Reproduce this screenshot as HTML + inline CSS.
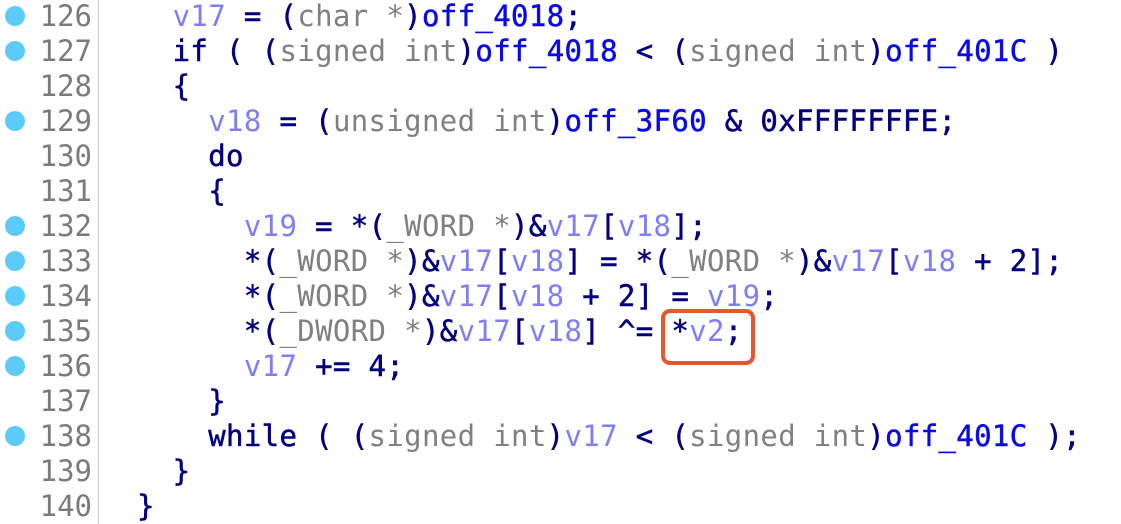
<!DOCTYPE html>
<html><head><meta charset="utf-8"><style>
html,body{margin:0;padding:0;background:#fff;width:1121px;height:524px;overflow:hidden}
.l{position:absolute;left:0;height:35px;width:1121px;font-family:"DejaVu Sans Mono","Liberation Mono",monospace;font-size:29px;line-height:35px;white-space:pre}
.n{position:absolute;left:30px;width:62px;text-align:right;color:#7b7b7b}
.d{position:absolute;left:5px;top:7px;width:20px;height:20px;border-radius:50%;background:#5ccbf9}
.c{position:absolute;left:137px;color:#000080;letter-spacing:0.35px;-webkit-text-stroke:0.5px #000080}
.v{color:#7f7ff5;-webkit-text-stroke:0}
.t{color:#808080;-webkit-text-stroke:0}
.b{color:#0a0ae6;-webkit-text-stroke:0.5px #0a0ae6}
.sep{position:absolute;left:98px;top:0;width:1px;height:524px;background:#d0d0d0}
.box{position:absolute;left:661px;top:309px;width:86px;height:48px;border:4px solid #e9562a;border-radius:9px}
</style></head><body>
<div class="sep"></div>
<div class="l" style="top:-1px"><div class="d"></div><span class="n">126</span><span class="c">  <span class="v">v17</span> = (<span class="t">char *</span>)<span class="b">off_4018</span>;</span></div>
<div class="l" style="top:34px"><div class="d"></div><span class="n">127</span><span class="c">  if ( (<span class="t">signed int</span>)<span class="b">off_4018</span> &lt; (<span class="t">signed int</span>)<span class="b">off_401C</span> )</span></div>
<div class="l" style="top:69px"><span class="n">128</span><span class="c">  {</span></div>
<div class="l" style="top:104px"><div class="d"></div><span class="n">129</span><span class="c">    <span class="v">v18</span> = (<span class="t">unsigned int</span>)<span class="b">off_3F60</span> &amp; 0xFFFFFFFE;</span></div>
<div class="l" style="top:139px"><span class="n">130</span><span class="c">    do</span></div>
<div class="l" style="top:174px"><span class="n">131</span><span class="c">    {</span></div>
<div class="l" style="top:209px"><div class="d"></div><span class="n">132</span><span class="c">      <span class="v">v19</span> = *(<span class="t">_WORD *</span>)&amp;<span class="v">v17</span>[<span class="v">v18</span>];</span></div>
<div class="l" style="top:244px"><div class="d"></div><span class="n">133</span><span class="c">      *(<span class="t">_WORD *</span>)&amp;<span class="v">v17</span>[<span class="v">v18</span>] = *(<span class="t">_WORD *</span>)&amp;<span class="v">v17</span>[<span class="v">v18</span> + 2];</span></div>
<div class="l" style="top:279px"><div class="d"></div><span class="n">134</span><span class="c">      *(<span class="t">_WORD *</span>)&amp;<span class="v">v17</span>[<span class="v">v18</span> + 2] = <span class="v">v19</span>;</span></div>
<div class="l" style="top:314px"><div class="d"></div><span class="n">135</span><span class="c">      *(<span class="t">_DWORD *</span>)&amp;<span class="v">v17</span>[<span class="v">v18</span>] ^= *<span class="v">v2</span>;</span></div>
<div class="l" style="top:349px"><div class="d"></div><span class="n">136</span><span class="c">      <span class="v">v17</span> += 4;</span></div>
<div class="l" style="top:384px"><span class="n">137</span><span class="c">    }</span></div>
<div class="l" style="top:419px"><div class="d"></div><span class="n">138</span><span class="c">    while ( (<span class="t">signed int</span>)<span class="v">v17</span> &lt; (<span class="t">signed int</span>)<span class="b">off_401C</span> );</span></div>
<div class="l" style="top:454px"><span class="n">139</span><span class="c">  }</span></div>
<div class="l" style="top:489px"><span class="n">140</span><span class="c">}</span></div>
<div class="box"></div>
</body></html>
